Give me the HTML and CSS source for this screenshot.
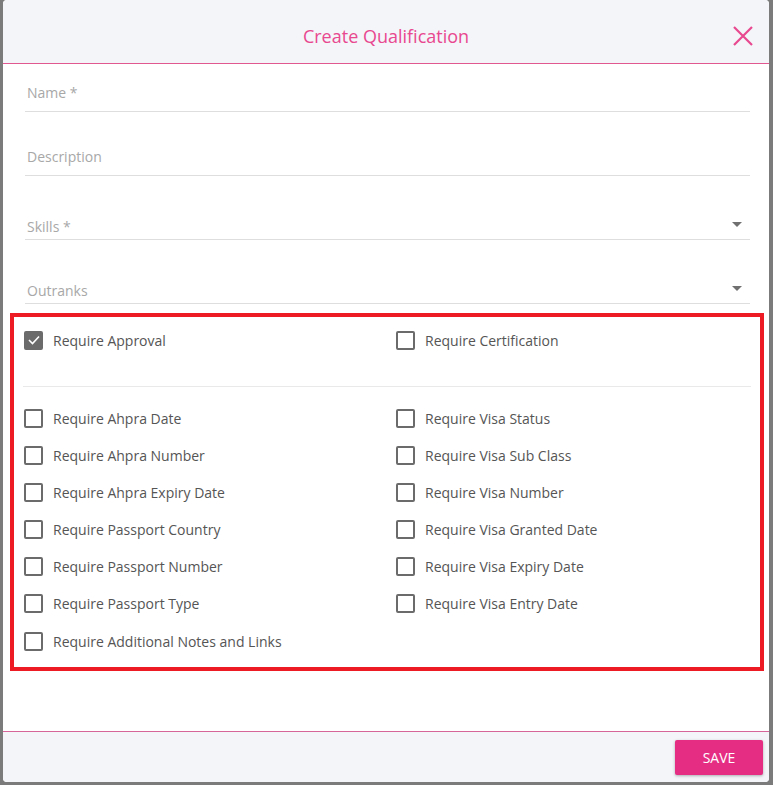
FILE: index.html
```html
<!DOCTYPE html>
<html>
<head>
<meta charset="utf-8">
<link rel="stylesheet" href="styles.css">
</head>
<body>
<div class="dialog">
  <header class="dlg-head">
    <h1 class="dlg-title">Create Qualification</h1>
    <button class="close" aria-label="Close">
      <svg width="22" height="22" viewBox="0 0 22 22"><path d="M2 2 L20 20 M20 2 L2 20" stroke="#e8488f" stroke-width="2.2" fill="none"/></svg>
    </button>
  </header>
  <main class="dlg-body">
    <div class="field f-name"><span class="ph">Name *</span></div>
    <div class="field f-desc"><span class="ph">Description</span></div>
    <div class="field f-sel"><span class="ph">Skills *</span><span class="caret"></span></div>
    <div class="field f-sel"><span class="ph">Outranks</span><span class="caret"></span></div>

    <section class="checks">
      <div class="grid top">
        <label class="cb"><span class="box checked"><svg width="12" height="10" viewBox="0 0 12 10"><path d="M1 5 L4.5 8.5 L11 1.5" stroke="#fff" stroke-width="1.6" fill="none"/></svg></span>Require Approval</label>
        <label class="cb"><span class="box"></span>Require Certification</label>
      </div>
      <hr class="sep">
      <div class="grid">
        <label class="cb"><span class="box"></span>Require Ahpra Date</label>
        <label class="cb"><span class="box"></span>Require Visa Status</label>
        <label class="cb"><span class="box"></span>Require Ahpra Number</label>
        <label class="cb"><span class="box"></span>Require Visa Sub Class</label>
        <label class="cb"><span class="box"></span>Require Ahpra Expiry Date</label>
        <label class="cb"><span class="box"></span>Require Visa Number</label>
        <label class="cb"><span class="box"></span>Require Passport Country</label>
        <label class="cb"><span class="box"></span>Require Visa Granted Date</label>
        <label class="cb"><span class="box"></span>Require Passport Number</label>
        <label class="cb"><span class="box"></span>Require Visa Expiry Date</label>
        <label class="cb"><span class="box"></span>Require Passport Type</label>
        <label class="cb"><span class="box"></span>Require Visa Entry Date</label>
        <label class="cb"><span class="box"></span>Require Additional Notes and Links</label>
      </div>
    </section>
  </main>
  <footer class="dlg-foot">
    <button class="save">SAVE</button>
  </footer>
</div>
</body>
</html>
```

FILE: styles.css
```css
* { box-sizing: border-box; }
html, body { margin: 0; padding: 0; }
body {
  background: #7b7b7b;
  width: 773px;
  height: 785px;
  font-family: "Open Sans", "Noto Sans", sans-serif;
  overflow: hidden;
}
.dialog {
  margin-left: 3px;
  width: 766px;
  height: 782px;
  background: #fff;
  border-radius: 4px;
  display: flex;
  flex-direction: column;
  overflow: hidden;
}
.dlg-head {
  height: 64px;
  flex: none;
  background: #f4f5f9;
  border-bottom: 1px solid #e0588f;
  display: flex;
  align-items: center;
  justify-content: center;
  position: relative;
}
.dlg-title {
  margin: 0;
  font-weight: 400;
  font-size: 18px;
  color: #e8488f;
  padding-top: 9px;
}
.close {
  position: absolute;
  right: 15px;
  top: 25px;
  border: 0;
  background: none;
  padding: 0;
  width: 22px;
  height: 22px;
}
.close svg { display: block; }
.dlg-body {
  flex: 1;
  padding: 9px 19px 0 7px;
}
.field {
  margin-left: 15px;
  height: 39px;
  border-bottom: 1px solid #dedede;
  display: flex;
  align-items: flex-start;
  position: relative;
}
.f-name { padding-top: 11px; }
.f-desc { margin-top: 25px; padding-top: 11px; }
.f-sel { margin-top: 25px; padding-top: 17px; }
.ph {
  font-size: 14px;
  color: #a8a8a8;
  line-height: 18px;
  padding-left: 2px;
}
.caret {
  position: absolute;
  right: 8px;
  top: 21px;
  width: 0;
  height: 0;
  border-left: 5px solid transparent;
  border-right: 5px solid transparent;
  border-top: 5px solid #707070;
}
.checks {
  margin-top: 9px;
  border: 4px solid #ed1c24;
  width: 754px;
  padding: 11px 9px 1px 10px;
}
.grid {
  display: grid;
  grid-template-columns: 372px 1fr;
  grid-auto-rows: 37.2px;
}
.grid.top { grid-auto-rows: 24px; }
.cb {
  display: flex;
  align-items: center;
  font-size: 14px;
  color: #555;
  height: 24px;
}
.box {
  width: 19px;
  height: 19px;
  border: 2px solid #6b6b6b;
  border-radius: 2px;
  margin-right: 10px;
  flex: none;
  display: flex;
  align-items: center;
  justify-content: center;
}
.box.checked { background: #6b6b6b; }
.box svg { display: block; }
.sep {
  border: 0;
  border-top: 1px solid #e9e9e9;
  margin: 34px 0 19px -1px;
  width: 728px;
}
.dlg-foot {
  height: 51px;
  flex: none;
  background: #f4f5f9;
  border-top: 1px solid #d6669a;
  display: flex;
  justify-content: flex-end;
  align-items: flex-start;
  padding: 8px 6px 0 0;
}
.save {
  width: 88px;
  height: 35px;
  border: 0;
  border-radius: 2px;
  background: #e52e83;
  color: #fff;
  font-family: "Open Sans", sans-serif;
  font-size: 14px;
  box-shadow: 0 1px 3px rgba(0,0,0,0.3);
  padding: 0;
}
```
